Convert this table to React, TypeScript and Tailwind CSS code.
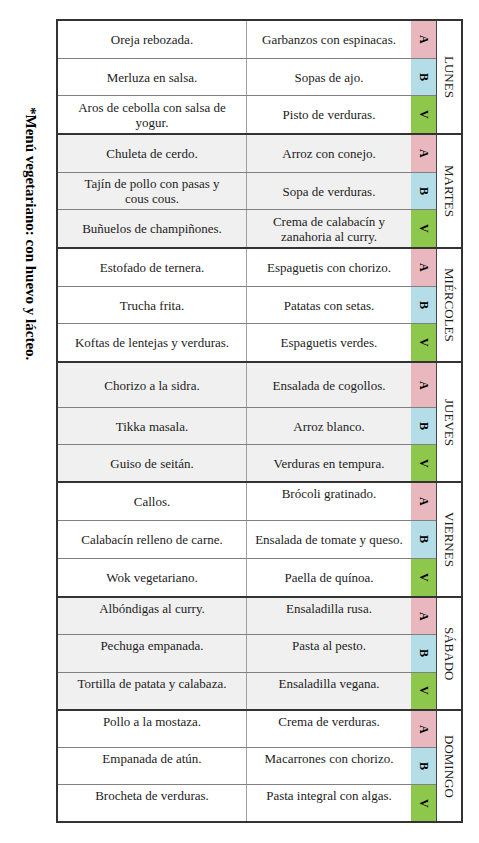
type Row = { a: string; b: string; top?: boolean; topA?: boolean };

interface Day {
  name: string;
  gray: boolean;
  height: string;
  rows: Row[];
  firstRow?: string;
}

const LETTERS = [
  { l: "A", bg: "bg-[#e8b8be]" },
  { l: "B", bg: "bg-[#b4dde7]" },
  { l: "V", bg: "bg-[#8dc84c]" },
];

const WEEK: Day[] = [
  {
    name: "LUNES",
    gray: false,
    height: "h-[112px]",
    rows: [
      { a: "Oreja rebozada.", b: "Garbanzos con espinacas." },
      { a: "Merluza en salsa.", b: "Sopas de ajo." },
      { a: "Aros de cebolla con salsa de yogur.", b: "Pisto de verduras." },
    ],
  },
  {
    name: "MARTES",
    gray: true,
    height: "h-[114px]",
    rows: [
      { a: "Chuleta de cerdo.", b: "Arroz con conejo." },
      { a: "Tajín de pollo con pasas y cous cous.", b: "Sopa de verduras." },
      { a: "Buñuelos de champiñones.", b: "Crema de calabacín y zanahoria al curry." },
    ],
  },
  {
    name: "MIÉRCOLES",
    gray: false,
    height: "h-[114px]",
    rows: [
      { a: "Estofado de ternera.", b: "Espaguetis con chorizo." },
      { a: "Trucha frita.", b: "Patatas con setas." },
      { a: "Koftas de lentejas y verduras.", b: "Espaguetis verdes." },
    ],
  },
  {
    name: "JUEVES",
    gray: true,
    height: "h-[120px]",
    firstRow: "h-[44px] shrink-0",
    rows: [
      { a: "Chorizo a la sidra.", b: "Ensalada de cogollos." },
      { a: "Tikka masala.", b: "Arroz blanco." },
      { a: "Guiso de seitán.", b: "Verduras en tempura." },
    ],
  },
  {
    name: "VIERNES",
    gray: false,
    height: "h-[115px]",
    rows: [
      { a: "Callos.", b: "Brócoli gratinado.", topA: true },
      { a: "Calabacín relleno de carne.", b: "Ensalada de tomate y queso." },
      { a: "Wok vegetariano.", b: "Paella de quínoa." },
    ],
  },
  {
    name: "SÁBADO",
    gray: true,
    height: "h-[113px]",
    rows: [
      { a: "Albóndigas al curry.", b: "Ensaladilla rusa.", top: true },
      { a: "Pechuga empanada.", b: "Pasta al pesto.", top: true },
      { a: "Tortilla de patata y calabaza.", b: "Ensaladilla vegana.", top: true },
    ],
  },
  {
    name: "DOMINGO",
    gray: false,
    height: "h-[112px]",
    rows: [
      { a: "Pollo a la mostaza.", b: "Crema de verduras.", top: true },
      { a: "Empanada de atún.", b: "Macarrones con chorizo.", top: true },
      { a: "Brocheta de verduras.", b: "Pasta integral con algas.", top: true },
    ],
  },
];

function Cell({ text, top, className }: { text: string; top?: boolean; className: string }) {
  return (
    <div
      className={`flex justify-center text-center text-[13px] leading-[15px] ${
        top ? "items-start pt-[3px]" : "items-center"
      } ${className}`}
    >
      <span>{text}</span>
    </div>
  );
}

export default function App() {
  return (
    <div
      className="flex w-[479px] h-[843px] bg-white text-[#1c1c1c]"
      style={{ fontFamily: '"Liberation Serif", "Times New Roman", serif' }}
    >
      {/* side note */}
      <div className="w-[56px] shrink-0 flex justify-center pl-[4px] pt-[107px]">
        <span className="[writing-mode:vertical-rl] text-[15px] font-bold leading-none text-black">
          *Menú vegetariano: con huevo y lácteo.
        </span>
      </div>

      {/* menu table */}
      <div className="mt-[19px] w-[407px] h-[804px] border-2 border-[#333] flex flex-col">
        {WEEK.map((day, di) => (
          <div
            key={day.name}
            className={`flex ${day.height} ${di > 0 ? "border-t-2 border-[#333]" : ""} ${
              day.gray ? "bg-[#f0f0f0]" : "bg-white"
            }`}
          >
            <div className="flex flex-col w-[378px]">
              {day.rows.map((r, ri) => (
                <div
                  key={ri}
                  className={`flex ${ri === 0 && day.firstRow ? day.firstRow : "flex-1"} ${
                    ri > 0 ? "border-t border-[#808080]" : ""
                  }`}
                >
                  <Cell text={r.a} top={r.top} className="w-[188px] px-[14px]" />
                  <Cell
                    text={r.b}
                    top={r.top || r.topA}
                    className="w-[165px] px-[4px] border-l border-[#a0a0a0]"
                  />
                  <div className={`w-[25px] flex items-center justify-center ${LETTERS[ri].bg}`}>
                    <span className="[writing-mode:vertical-rl] text-[12px] font-bold leading-none text-black">
                      {LETTERS[ri].l}
                    </span>
                  </div>
                </div>
              ))}
            </div>
            <div className="w-[25px] border-l border-[#444] bg-white flex items-center justify-center">
              <span className="[writing-mode:vertical-rl] text-[13px] leading-none">
                {day.name}
              </span>
            </div>
          </div>
        ))}
      </div>
    </div>
  );
}
